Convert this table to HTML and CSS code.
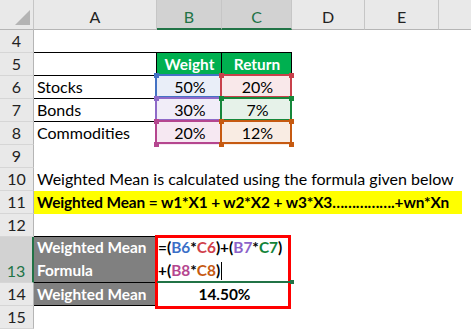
FILE: index.html
```html
<!DOCTYPE html>
<html>
<head>
<meta charset="utf-8">
<link rel="stylesheet" href="styles.css">
</head>
<body>
<div class="sheet">
  <div class="corner"><span class="tri"></span></div>
  <div class="ch">A</div>
  <div class="ch sel">B</div>
  <div class="ch sel">C</div>
  <div class="ch">D</div>
  <div class="ch">E</div>
  <div class="ch"></div>

  <div class="rh">4</div>
  <div class="c bk"></div>
  <div class="c bk"></div>
  <div class="c bk"></div>
  <div class="c"></div><div class="c"></div><div class="c"></div>

  <div class="rh">5</div>
  <div class="c bk bkr"></div>
  <div class="c hd bk bkr">Weight</div>
  <div class="c hd bk bkr">Return</div>
  <div class="c"></div><div class="c"></div><div class="c"></div>

  <div class="rh">6</div>
  <div class="c bk">Stocks</div>
  <div class="c hl colb r1">50%</div>
  <div class="c hl colc r2">20%</div>
  <div class="c"></div><div class="c"></div><div class="c"></div>

  <div class="rh">7</div>
  <div class="c bk">Bonds</div>
  <div class="c hl colb r3">30%</div>
  <div class="c hl colc r4">7%</div>
  <div class="c"></div><div class="c"></div><div class="c"></div>

  <div class="rh">8</div>
  <div class="c">Commodities</div>
  <div class="c hl colb r5">20%</div>
  <div class="c hl colc r6">12%</div>
  <div class="c"></div><div class="c"></div><div class="c"></div>

  <div class="rh">9</div>
  <div class="c"></div><div class="c"></div><div class="c"></div>
  <div class="c"></div><div class="c"></div><div class="c"></div>

  <div class="rh">10</div>
  <div class="c wide">Weighted Mean is calculated using the formula given below</div>

  <div class="rh">11</div>
  <div class="c wide yellow">Weighted Mean = w1*X1 + w2*X2 + w3*X3…………….+wn*Xn</div>

  <div class="rh">12</div>
  <div class="c bk"></div><div class="c"></div><div class="c"></div>
  <div class="c"></div><div class="c"></div><div class="c"></div>

  <div class="rh sel">13</div>
  <div class="c gray bk tall">Weighted Mean<br>Formula</div>
  <div class="calc">
    <div class="fx">
      <div class="ln">=(<span class="t1">B6</span>*<span class="t2">C6</span>)+(<span class="t3">B7</span>*<span class="t4">C7</span>)</div>
      <div class="ln">+(<span class="t5">B8</span>*<span class="t6">C8</span>)<span class="caret"></span></div>
    </div>
    <div class="res">14.50%</div>
  </div>
  <div class="c"></div><div class="c"></div><div class="c"></div>

  <div class="rh">14</div>
  <div class="c gray bk">Weighted Mean</div>
  <div class="c"></div><div class="c"></div><div class="c"></div>

  <div class="rh">15</div>
  <div class="c"></div><div class="c"></div><div class="c"></div>
  <div class="c"></div><div class="c"></div><div class="c"></div>
</div>
</body>
</html>
```

FILE: styles.css
```css
* { box-sizing: border-box; }
html, body {
  margin: 0;
  padding: 0;
  background: #fff;
  overflow: hidden;
}
body {
  font-family: Lato, "Open Sans", sans-serif;
  font-size: 16px;
  color: #000;
}
.sheet {
  display: grid;
  grid-template-columns: 34px 123px 65px 70px 73px 74px 33px;
  grid-template-rows: 30px repeat(9, 23px) 46px 23px 23px;
  width: 472px;
}

/* headers */
.corner {
  position: relative;
  background: #e9e9e9;
  border-right: 1px solid #c6c6c6;
  border-bottom: 1px solid #b5b5b5;
}
.tri {
  position: absolute;
  right: 3px;
  bottom: 4px;
  width: 0;
  height: 0;
  border-left: 15px solid transparent;
  border-bottom: 15px solid #b4b4b4;
}
.ch {
  display: flex;
  align-items: flex-end;
  justify-content: center;
  padding-bottom: 3px;
  line-height: 18px;
  background: #e9e9e9;
  border-right: 1px solid #c6c6c6;
  border-bottom: 1px solid #b5b5b5;
  color: #222;
}
.ch.sel {
  background: #d2d2d2;
  color: #217346;
  border-bottom: 2px solid #217346;
  padding-bottom: 2px;
}
.rh {
  display: flex;
  align-items: flex-end;
  justify-content: center;
  padding-bottom: 2px;
  line-height: 18px;
  background: #e9e9e9;
  border-right: 1px solid #b5b5b5;
  border-bottom: 1px solid #d6d6d6;
  color: #222;
}
.rh.sel {
  background: #d2d2d2;
  color: #217346;
  border-right: 2px solid #217346;
}

/* cells */
.c {
  display: flex;
  align-items: flex-end;
  padding: 0 2px 2px 3px;
  line-height: 18px;
  white-space: nowrap;
  border-bottom: 1px solid transparent;
}
.bk { border-bottom-color: #000; }
.bkr { border-right: 1px solid #000; }
.hd {
  background: #00b050;
  color: #fff;
  font-weight: 700;
  font-size: 15.4px;
  justify-content: center;
}
.wide { grid-column: 2 / -1; }
.yellow {
  background: #ffff00;
  font-weight: 700;
  font-size: 15.4px;
  letter-spacing: -0.1px;
  margin-right: 10px;
}
.gray {
  background: #808080;
  color: #fff;
  font-weight: 700;
  font-size: 15.4px;
}
.tall { line-height: 23px; padding-bottom: 0; }

/* formula reference highlights */
.hl {
  position: relative;
  justify-content: center;
  background: var(--f);
}
.hl::before {
  content: "";
  position: absolute;
  left: -2px;
  top: -2px;
  right: 0;
  bottom: 0;
  border: 2px solid var(--k);
}
.hl::after {
  content: "";
  position: absolute;
  left: -3px;
  top: -3px;
  width: 5px;
  height: 5px;
  background: var(--k);
  box-shadow: var(--w) 0 0 var(--k), 0 23px 0 var(--k), var(--w) 23px 0 var(--k);
}
.colb { --w: 65px; }
.colc { --w: 70px; }
.r1 { --k: #4472c4; --f: #e9eef8; }
.r2 { --k: #c8414b; --f: #f9e8ea; }
.r3 { --k: #8e6ac8; --f: #f1edf8; }
.r4 { --k: #16873a; --f: #e6f2e9; }
.r5 { --k: #b5468f; --f: #f6e8f2; }
.r6 { --k: #c65a11; --f: #f9ece3; }

/* formula box */
.calc {
  grid-column: 3 / 5;
  grid-row: 11 / 13;
  position: relative;
  display: flex;
  flex-direction: column;
  font-weight: 700;
  font-size: 15.4px;
}
.calc::after {
  content: "";
  position: absolute;
  left: -2px;
  top: -2px;
  right: 1px;
  bottom: -3px;
  border: 3px solid #ff0000;
}
.fx {
  position: relative;
  height: 46px;
  padding: 0 0 1px 1px;
  display: flex;
  flex-direction: column;
  justify-content: flex-end;
  line-height: 23px;
}
.fx::before {
  content: "";
  position: absolute;
  left: 0;
  right: -2px;
  bottom: 0;
  height: 2px;
  background: #217346;
  z-index: 1;
}
.fx::after {
  content: "";
  position: absolute;
  right: -2px;
  bottom: -1px;
  width: 4px;
  height: 4px;
  background: #217346;
  z-index: 1;
}
.ln { white-space: nowrap; }
.caret {
  display: inline-block;
  width: 1px;
  height: 18px;
  background: #000;
  vertical-align: -4px;
  margin-left: 1px;
}
.t1 { color: #3a6fc8; }
.t2 { color: #d0404a; }
.t3 { color: #8c62c9; }
.t4 { color: #14843a; }
.t5 { color: #b5468f; }
.t6 { color: #c65a11; }
.res {
  height: 23px;
  display: flex;
  align-items: flex-end;
  justify-content: center;
  padding-bottom: 3px;
  line-height: 18px;
}
```
